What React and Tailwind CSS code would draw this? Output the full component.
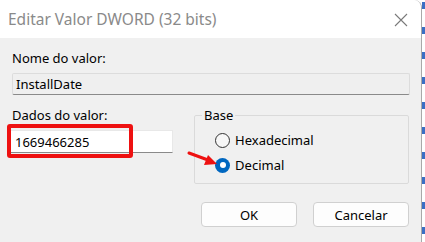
import React from 'react';

const font = { fontFamily: '"Noto Sans", "Open Sans", sans-serif' };

const Radio = ({ checked, label }) => (
    <div className="flex items-center h-[16px]">
        {checked ? (
            <span className="w-[15px] h-[15px] rounded-full bg-[#0067c0] flex items-center justify-center">
                <span className="w-[6px] h-[6px] rounded-full bg-white" />
            </span>
        ) : (
            <span className="w-[15px] h-[15px] rounded-full border border-[#333333] bg-[#f7f7f7]" />
        )}
        <span className="ml-[5px] text-[13px] leading-[16px] text-black">{label}</span>
    </div>
);

const App = () => {
    return (
        <div className="w-[425px] h-[242px] bg-white flex overflow-hidden" style={font}>
            {/* Dialog */}
            <div className="relative w-[422px] h-full bg-[#f0f0f0] rounded-tr-[8px] border-r border-[#a9a9a9] flex flex-col overflow-hidden">
                {/* Title bar */}
                <div className="h-[38px] bg-white flex items-center justify-between pl-[8px] pr-[12px] shrink-0">
                    <span className="text-[15.5px] leading-[20px] text-[#8a8a8a]">Editar Valor DWORD (32 bits)</span>
                    <svg width="16" height="16" viewBox="0 0 16 16" className="mt-[1px]">
                        <path d="M2 2 L14 14 M14 2 L2 14" stroke="#7a7a7a" strokeWidth="1.1" />
                    </svg>
                </div>

                {/* Body */}
                <div className="flex flex-col px-[12px] pt-[12px] text-black">
                    <label className="text-[13px] leading-[16px]">Nome do valor:</label>
                    <div className="mt-[7px] h-[22px] w-[398px] border border-[#dcdcdc] border-b-[#8a8a8a] bg-[#efefef] flex items-center px-[3px] rounded-[2px]">
                        <span className="text-[13px] leading-[16px]">InstallDate</span>
                    </div>

                    <div className="flex mt-[12px]">
                        {/* Value data */}
                        <div className="flex flex-col w-[183px]">
                            <label className="text-[13px] leading-[16px]">Dados do valor:</label>
                            <div className="relative mt-[7px] -ml-[2px] h-[23px] w-[163px] bg-white border border-[#e8e8e8] border-b-[#8a8a8a] flex items-center px-[4px]">
                                <span className="text-[13px] leading-[16px]">1669466285</span>
                                <div className="absolute -left-[4px] -top-[7px] w-[126px] h-[34px] border-[4px] border-[#ee1111] rounded-[3px]" />
                            </div>
                        </div>

                        {/* Base */}
                        <fieldset className="w-[216px] h-[77px] border border-[#dadada] rounded-[2px]">
                            <legend className="ml-[7px] px-[2px] text-[13px] leading-[16px]">Base</legend>
                            <div className="flex flex-col gap-[9px] mt-[9px] pl-[20px]">
                                <Radio label="Hexadecimal" />
                                <Radio checked label="Decimal" />
                            </div>
                        </fieldset>
                    </div>

                    {/* Buttons */}
                    <div className="flex justify-end gap-[16px] mt-[18px]">
                        <button className="w-[96px] h-[25px] bg-[#fdfdfd] border border-[#d0d0d0] rounded-[4px] text-[13px] leading-[16px]">OK</button>
                        <button className="w-[96px] h-[25px] bg-[#fdfdfd] border border-[#d0d0d0] rounded-[4px] text-[13px] leading-[16px]">Cancelar</button>
                    </div>
                </div>

                {/* Red arrow annotation */}
                <svg className="absolute left-[186px] top-[148px]" width="34" height="22" viewBox="0 0 34 22">
                    <path d="M3 5 L22 12" stroke="#ee1111" strokeWidth="3" strokeLinecap="round" />
                    <path d="M31 16 L18 17 L22 7 Z" fill="#ee1111" />
                </svg>
            </div>

            {/* Background behind dialog */}
            <div className="flex-1 flex flex-col pt-[2px] gap-[18px]">
                <div className="h-[7px] bg-[#3b6fc4]" />
                <div className="h-[7px] bg-[#3b6fc4]" />
                <div className="h-[7px] bg-[#3b6fc4]" />
                <div className="h-[7px] bg-[#3b6fc4]" />
                <div className="h-[7px] bg-[#3b6fc4]" />
                <div className="h-[7px] bg-[#3b6fc4]" />
                <div className="h-[7px] bg-[#3b6fc4]" />
                <div className="h-[7px] bg-[#3b6fc4]" />
                <div className="h-[7px] bg-[#3b6fc4]" />
                <div className="h-[7px] bg-[#3b6fc4]" />
            </div>
        </div>
    );
};

export default App;
